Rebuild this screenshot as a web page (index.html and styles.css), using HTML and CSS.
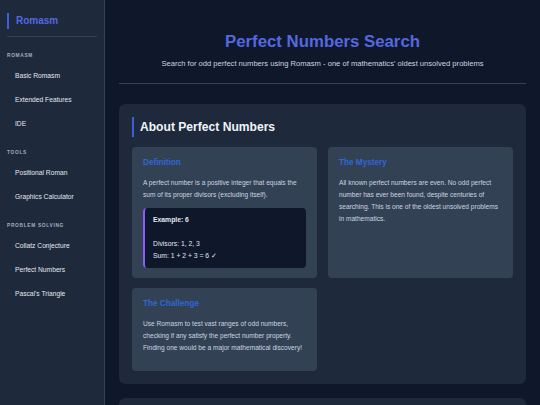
FILE: index.html
```html
<!DOCTYPE html>
<html lang="en">
<head>
  <meta charset="UTF-8">
  <title>Perfect Numbers Search - Romasm</title>
  <link rel="stylesheet" href="styles.css">
</head>
<body>
  <div class="layout">
    <aside class="sidebar">
      <div class="logo">Romasm</div>
      <nav>
        <div class="nav-label">Romasm</div>
        <a class="nav-item" href="#">Basic Romasm</a>
        <a class="nav-item" href="#">Extended Features</a>
        <a class="nav-item" href="#">IDE</a>

        <div class="nav-label">Tools</div>
        <a class="nav-item" href="#">Positional Roman</a>
        <a class="nav-item" href="#">Graphics Calculator</a>

        <div class="nav-label">Problem Solving</div>
        <a class="nav-item" href="#">Collatz Conjecture</a>
        <a class="nav-item" href="#">Perfect Numbers</a>
        <a class="nav-item" href="#">Pascal's Triangle</a>
      </nav>
    </aside>

    <main class="main">
      <header class="page-header">
        <h1>Perfect Numbers Search</h1>
        <p>Search for odd perfect numbers using Romasm - one of mathematics' oldest unsolved problems</p>
      </header>

      <section class="section">
        <h2>About Perfect Numbers</h2>
        <div class="cards">
          <div class="card">
            <h3>Definition</h3>
            <p>A perfect number is a positive integer that equals the sum of its proper divisors (excluding itself).</p>
            <div class="example">
              <strong>Example: 6</strong><br><br>
              Divisors: 1, 2, 3<br>
              Sum: 1 + 2 + 3 = 6 ✓
            </div>
          </div>
          <div class="card">
            <h3>The Mystery</h3>
            <p>All known perfect numbers are even. No odd perfect number has ever been found, despite centuries of searching. This is one of the oldest unsolved problems in mathematics.</p>
          </div>
          <div class="card">
            <h3>The Challenge</h3>
            <p>Use Romasm to test vast ranges of odd numbers, checking if any satisfy the perfect number property. Finding one would be a major mathematical discovery!</p>
          </div>
        </div>
      </section>

      <section class="section"></section>
    </main>
  </div>
</body>
</html>
```

FILE: styles.css
```css
* { box-sizing: border-box; }
body { margin: 0; font-family: "Liberation Sans", Arial, sans-serif; background: #0f172a; color: #e2e8f0; }
.layout { display: flex; height: 405px; overflow: hidden; }

.sidebar { width: 105px; flex-shrink: 0; background: #1e293b; border-right: 1px solid #334155; padding: 13px 7px; }
.logo { border-left: 2px solid #3b5fd6; padding: 2px 0 2px 7px; font-size: 10px; font-weight: bold; color: #5468e0; line-height: 12px; }
.sidebar nav { border-top: 1px solid #334155; margin-top: 7px; padding-top: 15px; }
.nav-label { font-size: 4.8px; font-weight: bold; letter-spacing: 0.7px; text-transform: uppercase; color: #a3aec2; line-height: 8px; margin: 0 0 8px; }
.nav-item { display: block; font-size: 6.7px; line-height: 8px; color: #e2e8f0; text-decoration: none; padding: 4px 8px; margin-bottom: 8px; }
.nav-item + .nav-label { margin-top: 17px; }

.main { flex: 1; padding: 15px 14px 14px; min-width: 0; }
.page-header { text-align: center; padding: 17px 0 14px; border-bottom: 1px solid #334155; margin-bottom: 20px; }
.page-header h1 { margin: 0 0 6px; font-size: 16.8px; line-height: 20px; color: #5468e0; }
.page-header p { margin: 0; font-size: 7.6px; line-height: 11px; color: #cbd5e1; }

.section { background: #1e293b; border-radius: 6px; padding: 13px; margin-bottom: 14px; min-height: 40px; }
.section h2 { margin: 0 0 10px; border-left: 2px solid #3b5fd6; padding-left: 6px; font-size: 12.1px; line-height: 20px; color: #f1f5f9; }
.cards { display: grid; grid-template-columns: 1fr 1fr; gap: 10px 11px; }
.card { background: #334155; border-radius: 4px; padding: 11px 11px 10px; }
.card h3 { margin: 0 0 9px; font-size: 8.2px; line-height: 10px; color: #2f66d6; }
.card p { margin: 0 0 7px; font-size: 6.6px; line-height: 12px; color: #cbd5e1; }
.example { background: #0f172a; border-left: 2px solid #8b5cf6; border-radius: 4px; padding: 6px 8px; font-size: 6.8px; line-height: 12px; color: #e2e8f0; }
```
